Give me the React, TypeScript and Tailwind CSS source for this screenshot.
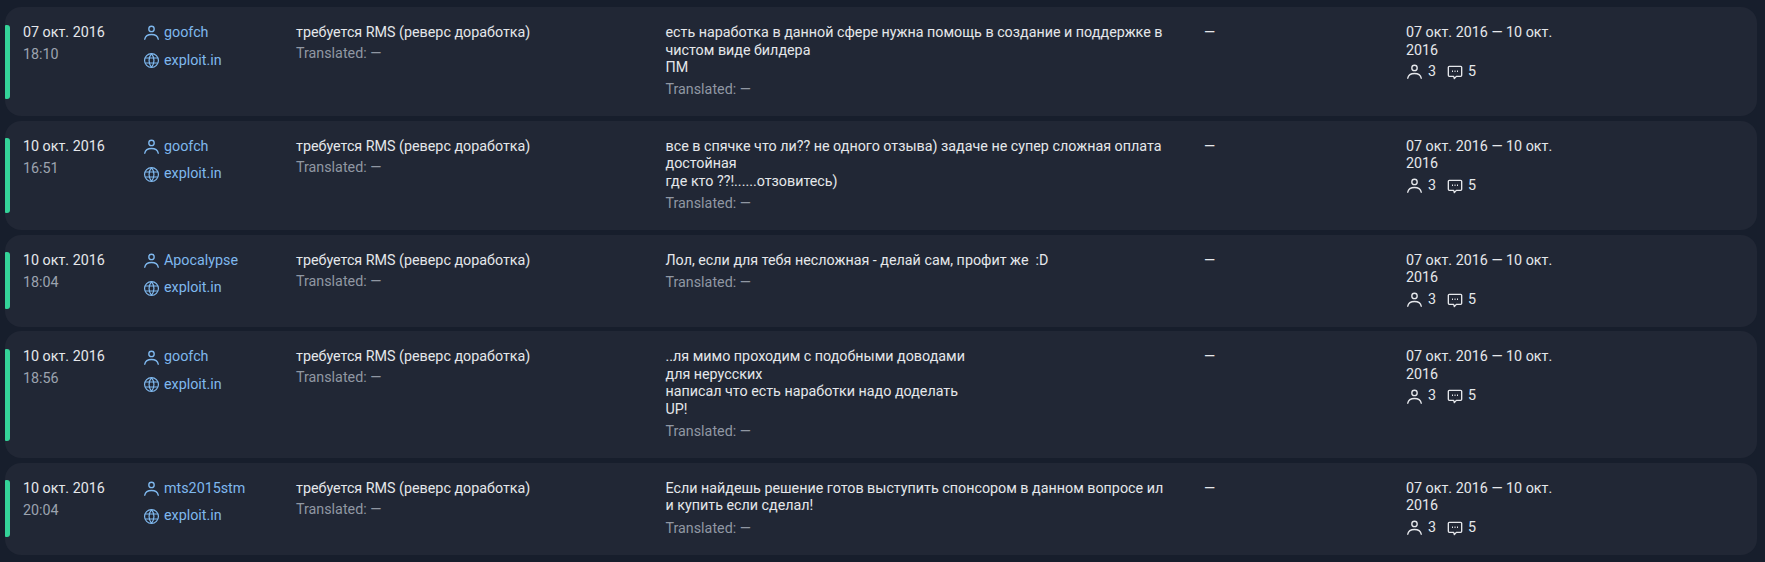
type Row = {
  date: string;
  time: string;
  author: string;
  lines: string[];
};

const rows: Row[] = [
  {
    date: "07 окт. 2016",
    time: "18:10",
    author: "goofch",
    lines: ["есть наработка в данной сфере нужна помощь в создание и поддержке в чистом виде билдера", "ПМ"],
  },
  {
    date: "10 окт. 2016",
    time: "16:51",
    author: "goofch",
    lines: ["все в спячке что ли?? не одного отзыва) задаче не супер сложная оплата достойная", "где кто ??!......отзовитесь)"],
  },
  {
    date: "10 окт. 2016",
    time: "18:04",
    author: "Apocalypse",
    lines: ["Лол, если для тебя несложная - делай сам, профит же  :D"],
  },
  {
    date: "10 окт. 2016",
    time: "18:56",
    author: "goofch",
    lines: ["..ля мимо проходим с подобными доводами", "для нерусских", "написал что есть наработки надо доделать", "UP!"],
  },
  {
    date: "10 окт. 2016",
    time: "20:04",
    author: "mts2015stm",
    lines: ["Если найдешь решение готов выступить спонсором в данном вопросе ил", "и купить если сделал!"],
  },
];

const PersonIcon = () => (
  <svg viewBox="0 0 24 24" className="size-[17px] shrink-0" fill="none" stroke="currentColor" strokeWidth="1.9" strokeLinecap="round">
    <circle cx="12" cy="7" r="3.8" />
    <path d="M2.500 21.500c.8-4.400 4.600-6.700 9.500-6.700s8.700 2.300 9.500 6.700" />
  </svg>
);

const GlobeIcon = () => (
  <svg viewBox="0 0 24 24" className="size-[17px] shrink-0" fill="none" stroke="currentColor" strokeWidth="1.7">
    <circle cx="12" cy="12" r="9.800" />
    <path d="M3 8.500h18M3 15.500h18" />
    <path d="M12 2.200c-4.600 5.800-4.600 13.800 0 19.600M12 2.200c4.600 5.800 4.600 13.800 0 19.600" />
  </svg>
);

const MessageIcon = () => (
  <svg viewBox="0 0 24 24" className="size-[16px] shrink-0" fill="none" stroke="currentColor" strokeWidth="2">
    <path d="M3.500 3.500h17a1.500 1.500 0 0 1 1.500 1.500v12a1.500 1.500 0 0 1-1.500 1.500H14l-3 3.500-1-3.500H3.500A1.500 1.500 0 0 1 2 17V5a1.500 1.500 0 0 1 1.500-1.500Z" strokeLinejoin="round" />
    <path d="M7.500 11h1.500M11.300 11h1.500M15 11h1.500" strokeWidth="2.200" />
  </svg>
);

const App = () => {
  return (
    <div className="h-[562px] overflow-hidden bg-[#171e2c] pl-[5px] pt-[7px] font-['Roboto',sans-serif] text-[14.3px] leading-[17.5px] text-[#e5e7eb]">
      <div className="flex w-[1752px] flex-col gap-[4.7px]">
        {rows.map((row, i) => (
          <div key={i} className="flex rounded-[16px] bg-[#212735] pt-[17px] pb-[17.5px]">
            <div className="mt-[0.5px] w-[5px] shrink-0 self-stretch rounded-r-[3px] rounded-l-[1px] bg-[#34d399]" />
            <div className="w-[133px] shrink-0 pl-[13px]">
              <p>{row.date}</p>
              <p className="mt-[4.500px] text-[#9ca3af]">{row.time}</p>
            </div>
            <div className="w-[153px] shrink-0 text-[#7fb8ee]">
              <p className="flex items-center gap-[4px]">
                <PersonIcon />
                {row.author}
              </p>
              <p className="mt-[10px] flex items-center gap-[4px]">
                <GlobeIcon />
                exploit.in
              </p>
            </div>
            <div className="w-[369.500px] shrink-0">
              <p>требуется RMS (реверс доработка)</p>
              <p className="mt-[3.500px] text-[#9097a3]">Translated: —</p>
            </div>
            <div className="w-[538.500px] shrink-0 pr-[30px]">
              {row.lines.map((line, j) => (
                <p key={j} className="whitespace-pre-wrap">
                  {line}
                </p>
              ))}
              <p className="mt-[4.700px] text-[#9097a3]">Translated: —</p>
            </div>
            <div className="w-[202px] shrink-0">—</div>
            <div className="w-[160px] shrink-0">
              <p>07 окт. 2016 — 10 окт. 2016</p>
              <div className="mt-[3px] flex h-[19.5px] items-center">
                <PersonIcon />
                <span className="ml-[5px]">3</span>
                <span className="ml-[11px]">
                  <MessageIcon />
                </span>
                <span className="ml-[5px]">5</span>
              </div>
            </div>
          </div>
        ))}
      </div>
    </div>
  );
};

export default App;
